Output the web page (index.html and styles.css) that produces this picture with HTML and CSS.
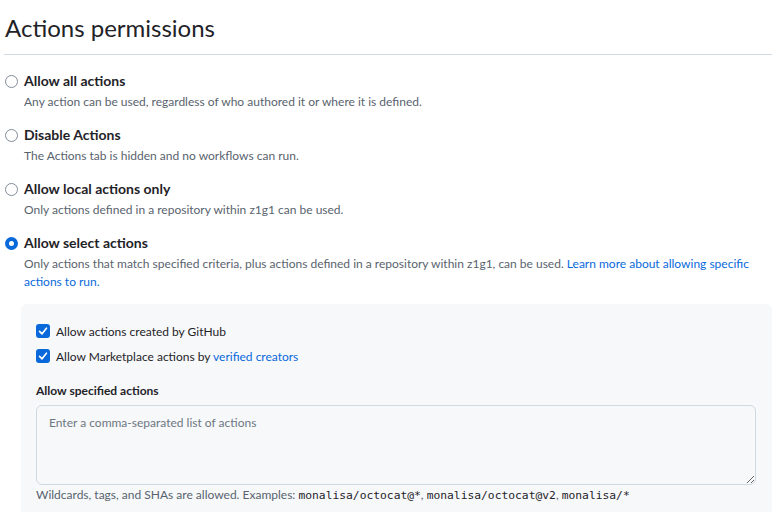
FILE: index.html
```html
<!DOCTYPE html>
<html>
<head>
<meta charset="utf-8">
<link rel="stylesheet" href="styles.css">
</head>
<body>
<div class="page">
  <h2 class="title">Actions permissions</h2>
  <div class="options">
    <div class="option">
      <span class="radio"></span>
      <div class="text">
        <div class="label">Allow all actions</div>
        <div class="desc">Any action can be used, regardless of who authored it or where it is defined.</div>
      </div>
    </div>
    <div class="option">
      <span class="radio"></span>
      <div class="text">
        <div class="label">Disable Actions</div>
        <div class="desc">The Actions tab is hidden and no workflows can run.</div>
      </div>
    </div>
    <div class="option">
      <span class="radio"></span>
      <div class="text">
        <div class="label">Allow local actions only</div>
        <div class="desc">Only actions defined in a repository within z1g1 can be used.</div>
      </div>
    </div>
    <div class="option">
      <span class="radio checked"></span>
      <div class="text">
        <div class="label">Allow select actions</div>
        <div class="desc">Only actions that match specified criteria, plus actions defined in a repository within z1g1, can be used. <a href="#">Learn more about allowing specific actions to run.</a></div>
      </div>
    </div>
  </div>
  <div class="box">
    <div class="check-row">
      <span class="checkbox"><svg width="10" height="10" viewBox="0 0 16 16"><path d="M2.5 8.5 L6.5 12.5 L13.5 3.5" fill="none" stroke="#fff" stroke-width="2.6" stroke-linecap="round" stroke-linejoin="round"/></svg></span>
      <span class="check-label">Allow actions created by GitHub</span>
    </div>
    <div class="check-row">
      <span class="checkbox"><svg width="10" height="10" viewBox="0 0 16 16"><path d="M2.5 8.5 L6.5 12.5 L13.5 3.5" fill="none" stroke="#fff" stroke-width="2.6" stroke-linecap="round" stroke-linejoin="round"/></svg></span>
      <span class="check-label">Allow Marketplace actions by <a href="#">verified creators</a></span>
    </div>
    <div class="field">
      <div class="field-label">Allow specified actions</div>
      <textarea class="input" placeholder="Enter a comma-separated list of actions"></textarea>
      <div class="hint">Wildcards, tags, and SHAs are allowed. Examples: <code>monalisa/octocat@*</code>, <code>monalisa/octocat@v2</code>, <code>monalisa/*</code></div>
    </div>
  </div>
</div>
</body>
</html>
```
FILE: styles.css
```css
html, body {
  margin: 0;
  padding: 0;
  background: #ffffff;
}
body {
  font-family: Lato, "Noto Sans", sans-serif;
  color: #1f2328;
  font-size: 14px;
}
.page {
  padding: 12px 11px 0 4px;
}
.title {
  margin: 0;
  padding: 0 0 10px 1px;
  font-size: 24px;
  font-weight: 400;
  line-height: 32px;
  border-bottom: 1px solid #d1d9e0;
}
.options {
  display: flex;
  flex-direction: column;
  gap: 14px;
  padding-top: 16px;
}
.option {
  display: flex;
  gap: 6px;
  padding-left: 1px;
}
.radio {
  flex: none;
  width: 13px;
  height: 13px;
  box-sizing: border-box;
  border: 1.5px solid #818b98;
  border-radius: 50%;
  margin-top: 4px;
  background: #fff;
}
.radio.checked {
  border: 4px solid #0969da;
  background: #fff;
}
.label {
  font-weight: 700;
  line-height: 20px;
}
.desc {
  font-size: 12px;
  line-height: 18px;
  color: #59636e;
  margin-top: 2px;
}
a {
  color: #0969da;
  text-decoration: none;
}
.box {
  margin: 13px 0 0 17px;
  background: #f6f8fa;
  border-radius: 6px;
  padding: 20px 16px 20px 15px;
}
.check-row {
  display: flex;
  align-items: center;
  gap: 6px;
  height: 14px;
  margin-bottom: 11px;
  font-size: 12px;
}
.checkbox {
  width: 14px;
  height: 14px;
  background: #0969da;
  border-radius: 3px;
  display: flex;
  align-items: center;
  justify-content: center;
}
.field {
  padding-top: 8px;
}
.field-label {
  font-size: 12px;
  font-weight: 700;
  line-height: 18px;
  margin-bottom: 5px;
}
.input {
  display: block;
  width: 100%;
  box-sizing: border-box;
  height: 80px;
  resize: vertical;
  border: 1px solid #d1d9e0;
  border-radius: 6px;
  background: #f6f8fa;
  padding: 9px 12px;
  font-family: inherit;
  font-size: 12px;
  color: #1f2328;
}
.input::placeholder {
  color: #6e7781;
}
.hint {
  font-size: 12px;
  line-height: 18px;
  color: #59636e;
  margin-top: 1px;
}
code {
  font-family: "DejaVu Sans Mono", monospace;
  font-size: 11.3px;
  color: #1f2328;
}
```
